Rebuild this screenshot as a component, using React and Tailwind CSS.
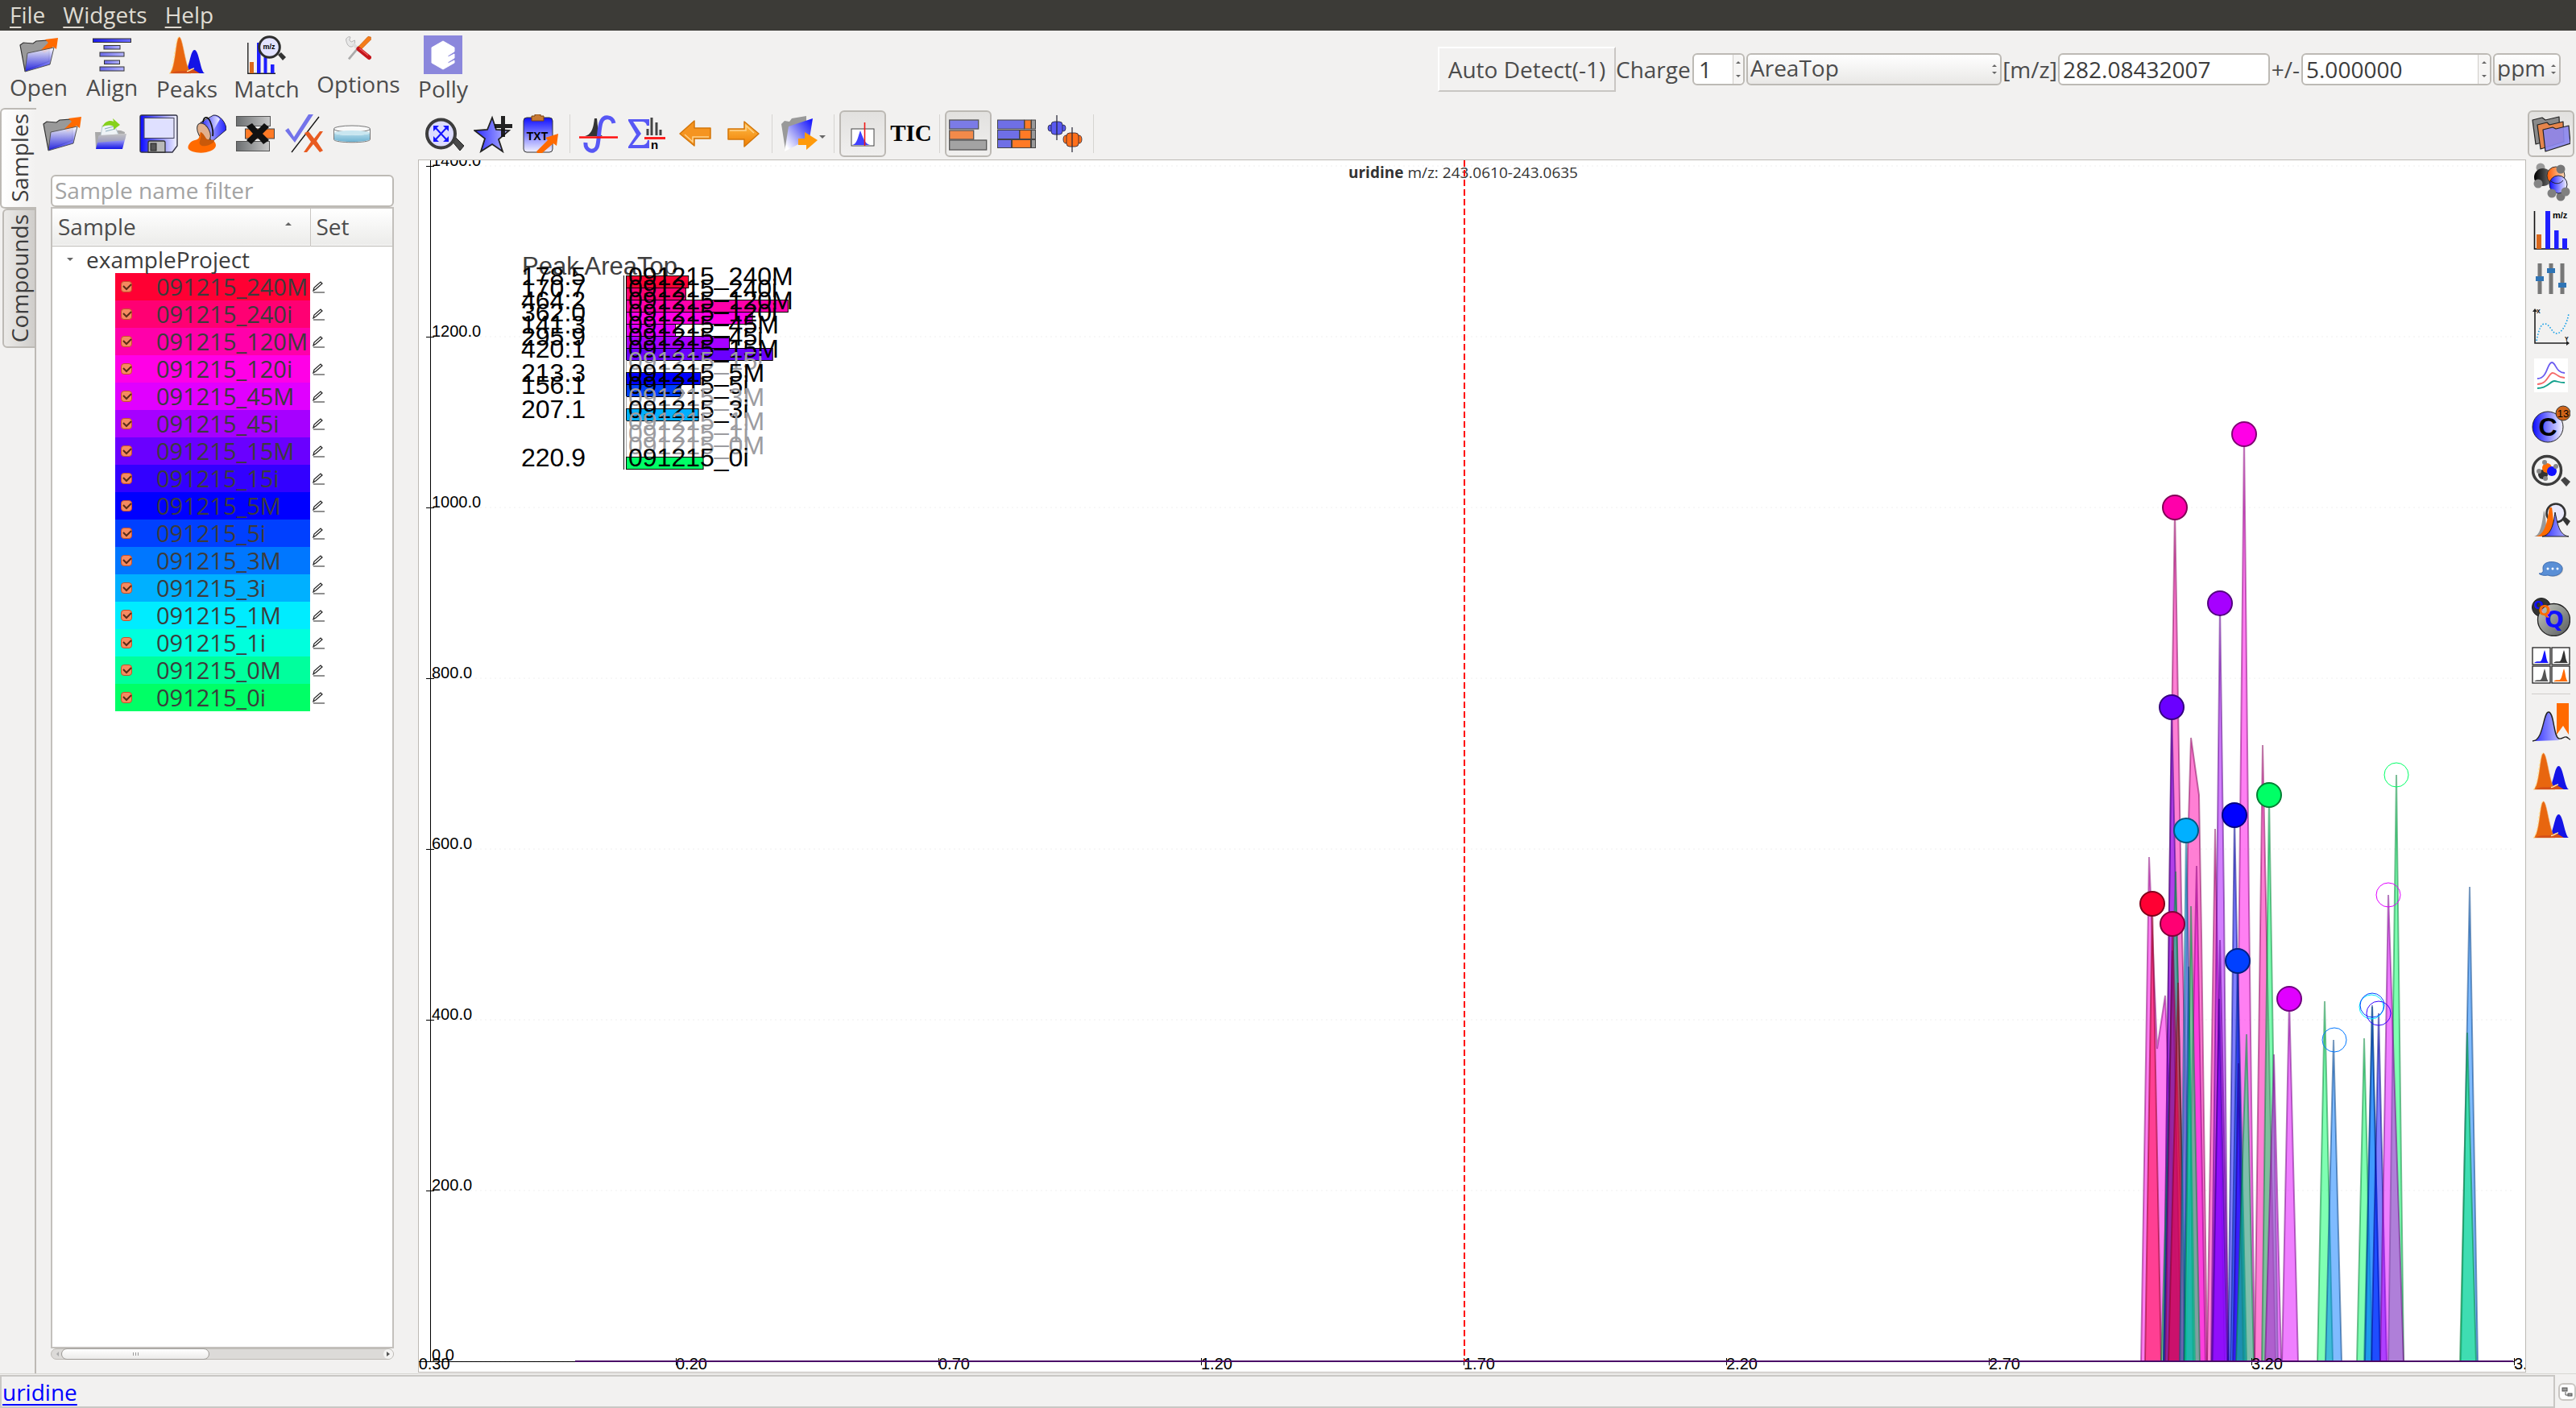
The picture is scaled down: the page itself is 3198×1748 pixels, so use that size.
import React from "react";

const SAMPLES = [
  { name: "091215_240M", color: "#ff0033", area: 178.5 },
  { name: "091215_240i", color: "#ff0073", area: 170.7 },
  { name: "091215_120M", color: "#ff00aa", area: 464.2 },
  { name: "091215_120i", color: "#ff00e6", area: 362.0 },
  { name: "091215_45M", color: "#e000ff", area: 141.3 },
  { name: "091215_45i", color: "#a600ff", area: 295.9 },
  { name: "091215_15M", color: "#6a00ff", area: 420.1 },
  { name: "091215_15i", color: "#3300ff" },
  { name: "091215_5M", color: "#0000ff", area: 213.3 },
  { name: "091215_5i", color: "#0040ff", area: 156.1 },
  { name: "091215_3M", color: "#0077ff" },
  { name: "091215_3i", color: "#00b0ff", area: 207.1 },
  { name: "091215_1M", color: "#00ecff" },
  { name: "091215_1i", color: "#00ffdd" },
  { name: "091215_0M", color: "#00ff9d" },
  { name: "091215_0i", color: "#00ff66", area: 220.9 },
];

/* ---------- icons ---------- */

function Defs() {
  const grads = [
    ["gBlue", "#ffffff", "#1414e6", 0, 1],
    ["gBlueUp", "#0f0fff", "#f2f2ff", 0, 1],
    ["gBlueH", "#0a0aff", "#f4f4ff", 1, 0],
    ["gBlueR", "#f0f0ff", "#2020ff", 1, 0],
    ["gOrange", "#ffc04d", "#f07d00", 0, 1],
    ["gSteel", "#6b6e70", "#c9c9c9", 1, 0],
    ["gBar", "#1a1aee", "#6f6fff", 1, 0],
    ["gBar2", "#6a6ae8", "#b4b4ff", 1, 0],
    ["gPeak", "#2b2bff", "#b9b9ff", 1, 0],
    ["gGrey", "#c9ccc4", "#55585a", 1, 1],
    ["gBlack", "#000000", "#777777", 1, 0],
    ["gOr2", "#ff5a00", "#ffd9b8", 1, 0],
    ["gWater", "#b5dcea", "#6fb3d2", 0, 1],
  ];
  return (
    <svg className="absolute size-0" aria-hidden="true">
      <defs>
        {grads.map(([id, a, b, x, y]) => (
          <linearGradient key={id} id={id} x1="0" y1="0" x2={x} y2={y}>
            <stop offset="0" stopColor={a} />
            <stop offset="1" stopColor={b} />
          </linearGradient>
        ))}
        <linearGradient id="gFold" x1="1" y1="0.1" x2="0.1" y2="0.9">
          <stop offset="0" stopColor="#1414ff" />
          <stop offset=".45" stopColor="#7c7cf4" />
          <stop offset="1" stopColor="#ffffff" />
        </linearGradient>
      </defs>
    </svg>
  );
}

function Svg({ children, className = "size-12" }) {
  return (
    <svg viewBox="0 0 48 48" className={className + " shrink-0"} aria-hidden="true">
      {children}
    </svg>
  );
}

const FolderOpen = () => (
  <Svg>
    <path d="M1 12 5 9l12 1 4-3 16-1v26L7 44z" fill="#999" stroke="#333" strokeWidth="1.2" />
    <path d="M27 18 36 9l-4-4L48 3l-2 14-4-3-11 8z" fill="#ff6a00" />
    <path d="M10 22 43 15 38 36 7 45z" fill="url(#gBlue)" fillOpacity=".88" stroke="#555" />
  </Svg>
);

const AlignIcon = () => (
  <Svg>
    <g stroke="#333" strokeWidth="1">
      <rect x=".5" y="4" width="47" height="4.5" fill="url(#gBar)" />
      <rect x="14" y="12.500" width="20" height="4.5" fill="url(#gBar2)" />
      <rect x="9" y="21" width="30" height="5" fill="url(#gBar2)" />
      <rect x="14.500" y="31" width="19" height="4.500" fill="url(#gBar2)" />
      <rect x="9" y="39" width="30" height="5" fill="url(#gBar2)" />
    </g>
  </Svg>
);

const PeaksIcon = () => (
  <Svg>
    <path d="M20 47C27 44 28 18 33.500 18S41 45 46 47z" fill="#1414e6" />
    <path d="M2 47C10 44 10 2 14.500 2S22 40 29 47z" fill="#e8660f" stroke="#f0a050" strokeWidth=".6" />
    <path d="M2 47C8 44 9 2 14 2" fill="none" stroke="#ffe9a8" strokeWidth="1.200" strokeDasharray="3 2" />
    <path d="M4 47c7-4 13-2 19-3l7-3 10 6z" fill="#d4501a" />
    <path d="M24 44.500c3 0 7-4 9-3.500" fill="none" stroke="#ffe9a8" strokeWidth="1.500" />
  </Svg>
);

const MatchIcon = () => (
  <Svg>
    <path d="M.8 9v38.300H35" fill="none" stroke="#222" strokeWidth="1.400" />
    <rect x="3" y="33" width="5" height="14" fill="#d9681c" />
    <rect x="12" y="9" width="4.500" height="38" fill="#1f1fff" />
    <rect x="20.500" y="24" width="4" height="23" fill="#1f1fff" />
    <rect x="29" y="36" width="4.500" height="11" fill="#1f1fff" />
    <path d="m38 24 4-3 6 6-4 4z" fill="#333" />
    <circle cx="27.500" cy="14.500" r="12.800" fill="#e3e3ff" stroke="#2d2d2d" strokeWidth="3" />
    <text x="27" y="17" textAnchor="middle" fontSize="9" fontWeight="700" fontFamily="Liberation Sans, sans-serif">m/z</text>
  </Svg>
);

const OptionsIcon = () => (
  <Svg className="size-8">
    <path d="m6 44 20-24" stroke="#aaa" strokeWidth="4" />
    <path d="M1 9c-1-4 5-8 8-6l-2 6 4 3 6-3c2 8-3 13-8 12S2 14 1 9z" fill="#e8e8e8" stroke="#999" />
    <path d="m14 16 12 12" stroke="#ddd" strokeWidth="6" />
    <path d="m22 23 20-21 5 1v5L27 28z" fill="#f57c1a" stroke="#c85a00" />
    <path d="m24 25 20 16" stroke="#c4161c" strokeWidth="8" strokeLinecap="round" />
    <path d="m26 24 16 13" stroke="#ee5b5b" strokeWidth="2" />
  </Svg>
);

const PollyIcon = () => (
  <Svg>
    <rect width="48" height="48" fill="#8b87dc" />
    <path d="m24 7 14 8v5l-8 5v2l8-4v5l-8 5v2l8-4v3l-14 8-14-8V15z" fill="#fff" stroke="#fff" strokeLinejoin="round" />
  </Svg>
);

const ImportIcon = () => (
  <Svg>
    <path d="M5 22h8l2-3 22 1 5 2-3 20H6z" fill="#a9a9a9" />
    <path d="m14 14 14-3 6 14-22 2z" fill="#eef3f6" stroke="#b9c8d0" />
    <path d="m17 18 11-3m-10 6 12-3" stroke="#8ab" />
    <path d="M14 16c3-8 10-9 14-7l-1-4 9 8-8 6v-4c-4-2-10-2-14 1z" fill="#86d11b" />
    <path d="m10 26 34-2-5 19H6z" fill="url(#gBlue)" />
    <path d="m10 26 34-2-2 8-34 3z" fill="#aaa" opacity=".7" />
  </Svg>
);

const SaveIcon = () => (
  <Svg>
    <path d="M1 3q0-2 2-2h42q2 0 2 2v36l-6 8H3q-2 0-2-2z" fill="url(#gBlueH)" stroke="#334" strokeWidth="1.400" />
    <rect x="6" y="4.500" width="37" height="25" fill="#dfe0ff" stroke="#445" />
    <path d="M11 47V35q0-2 2-2h17q2 0 2 2v12z" fill="#b9b9b9" stroke="#333" strokeWidth="1.300" />
    <rect x="14" y="36" width="7" height="9" fill="#555" stroke="#222" />
  </Svg>
);

const BucketIcon = () => (
  <Svg>
    <path d="m16 10 16-9c8-1 16 10 16 18L30 34z" fill="url(#gBlueR)" stroke="#223" />
    <path d="m14 12 18-10c4 0 6 2 8 4L24 34z" fill="url(#gBlueH)" />
    <ellipse cx="20" cy="22" rx="7" ry="12" transform="rotate(-28 20 22)" fill="#e2b08c" stroke="#333" />
    <path d="M19 10C20 2 25 2 28 9s4 12 3 18" fill="none" stroke="#111" strokeWidth="1.800" />
    <path d="M16 22c-2 6-1 9-7 10S-1 40 1 43s12 6 22 4 14-7 11-12-9-1-11-4-3-7-7-9z" fill="#ff6a00" />
    <path d="M16 22c2 10-4 12 0 16s17-2 17-5-8 0-10-3-3-6-7-8z" fill="#c9590a" />
  </Svg>
);

const RemoveIcon = () => (
  <Svg>
    <rect x=".5" y="2.500" width="42" height="12" fill="url(#gSteel)" stroke="#555" />
    <rect x=".5" y="33.500" width="41" height="12" fill="url(#gSteel)" stroke="#555" />
    <rect x="11.500" y="18" width="36" height="12" fill="#ff7a26" stroke="#444" />
    <path d="m13 15 7-4 7 8 8-8 6 5-8 8 8 8-7 5-7-8-8 8-6-5 8-8z" fill="#111" />
  </Svg>
);

const CheckCrossIcon = () => (
  <Svg>
    <path d="m1 20 4-3 7 11L30 0h6L13 35z" fill="#7373ea" />
    <path d="M9 47 43 3" stroke="#111" strokeWidth="1.300" />
    <path d="m25 23 5-2 7 9 7-9h4l-8 12 8 12-4 2-8-10-8 10h-4l9-13z" fill="#e85a20" />
  </Svg>
);

const PetriIcon = () => (
  <Svg>
    <path d="M1.500 18v13c0 5 45 5 45 0V18" fill="#f4fafc" stroke="#777" />
    <path d="M2 23c2 4 42 4 44 0v8c-2 4-42 4-44 0z" fill="url(#gWater)" />
    <ellipse cx="24" cy="18" rx="22.500" ry="4" fill="#f8f8f8" stroke="#777" />
    <ellipse cx="24" cy="23" rx="22" ry="3" fill="#c9e6f0" />
  </Svg>
);

const ZoomFitIcon = () => (
  <Svg>
    <path d="m33 33 5-4 10 10-5 6z" fill="#4a4a4a" stroke="#222" />
    <circle cx="19.500" cy="24" r="17.500" fill="#dcdcff" stroke="#3d3d3d" strokeWidth="4" />
    <path d="m13 17 13 14M26 17 13 31" stroke="#1414ff" strokeWidth="2" />
    <path d="M10 14h7l-7 7zm19 0v7l-7-7zM10 34v-7l7 7zm19 0h-7l7-7z" fill="#1414ff" />
  </Svg>
);

const StarIcon = () => (
  <Svg>
    <path d="m23 4 5 15 16 1-13 11 5 15-13-9-14 9 5-16L1 20l16-1z" fill="url(#gPeak)" stroke="#222" strokeWidth="1.800" />
    <path d="M34 2h5v10h9v5h-9v11h-5V17h-8v-5h8z" fill="#111" opacity=".92" />
  </Svg>
);

const TxtIcon = () => (
  <Svg>
    <rect x="2" y="4" width="36" height="43" rx="4" fill="url(#gBlueUp)" stroke="#333" />
    <path d="M12 6V2h4V0h7v2h4v6H12z" fill="#c87a34" stroke="#7a4310" />
    <text x="19" y="32" textAnchor="middle" fontSize="14" fontWeight="700" fontFamily="Liberation Sans, sans-serif">TXT</text>
    <path d="m18 46 14-14-3-3 16-5-2 15-4-3-14 12h-6z" fill="#ff6a00" />
  </Svg>
);

const IntegralIcon = () => (
  <Svg>
    <path d="M7 27c10-2 11-14 12-22h3c1 8 1 19 7 22z" fill="#333" />
    <path d="M8 35c-1 10 10 14 14 6 3-6 2-26 6-33 3-6 13-6 15 3" fill="none" stroke="#5757f5" strokeWidth="5" />
    <path d="M0 28.500h48" stroke="#ff1010" strokeWidth="2.500" />
  </Svg>
);

const SigmaIcon = () => (
  <Svg>
    <path d="M1 6h26v8h-3q-1-5-6-5H7l10 15L6 38h12q6 0 7-6h2v10H1v-2l10-15L1 8z" fill="#5757f5" />
    <path d="M25 26v-8m5 8V4m6 22V10m5 16v-7" stroke="#444" strokeWidth="3" />
    <path d="M21 29.500h26" stroke="#ff1f1f" strokeWidth="3" />
    <text x="29" y="43" fontSize="15" fontWeight="700" fontFamily="Liberation Sans, sans-serif">n</text>
  </Svg>
);

const ArrowIcon = ({ flip }) => (
  <Svg className={flip ? "size-12 rotate-180" : "size-12"}>
    <path d="M5 18h20V9l18 15-18 16v-9H5z" fill={flip ? "#f59420" : "url(#gOrange)"} stroke="#d37508" strokeWidth="1.500" strokeLinejoin="round" />
    <path d="M7 20h20v-6l10 9" fill="none" stroke="#ffd28a" strokeWidth="1.500" />
  </Svg>
);

const ExportFolderIcon = () => (
  <Svg>
    <path d="m1 12 4-4 6 1 3-4 18-3v8L6 44z" fill="#999" />
    <path d="m10 15 30-10-4 25L5 46z" fill="url(#gFold)" />
    <path d="M22 30h8v-8l16 10-14 12v-6H22z" fill="#ff9a0a" />
  </Svg>
);

const EicIcon = () => (
  <Svg>
    <rect x="10" y="18" width="28" height="21" fill="#fff" stroke="#444" />
    <path d="M11 38c6-1 7-10 10-18 3 8 6 17 12 18z" fill="#4040ff" />
    <path d="M26.500 10v29" stroke="#f01818" strokeWidth="1.600" />
  </Svg>
);

const BarsIcon = () => (
  <Svg>
    <g stroke="#555" strokeWidth="1.300">
      <rect x=".7" y="7" width="36" height="11" fill="#7b7be6" />
      <rect x=".7" y="20" width="30" height="11" fill="#f28a4a" />
      <rect x=".7" y="32" width="46" height="12" fill="#a3a3a3" />
    </g>
  </Svg>
);

const StackIcon = () => (
  <Svg>
    <g stroke="#444">
      <rect x=".5" y="7" width="33" height="11" fill="#6f6fe6" />
      <rect x="34" y="7" width="8" height="11" fill="#ff7a26" />
      <rect x="42.500" y="7" width="5" height="11" fill="#999" />
      <rect x=".5" y="19.500" width="27" height="11" fill="#6f6fe6" />
      <rect x="28" y="19.500" width="14" height="11" fill="#ff7a26" />
      <rect x="42.500" y="19.500" width="5" height="11" fill="#999" />
      <rect x=".5" y="31.500" width="17" height="10" fill="#6f6fe6" />
      <rect x="18.500" y="31.500" width="23" height="10" fill="#ff7a26" />
      <rect x="42.500" y="31.500" width="5" height="10" fill="#999" />
    </g>
  </Svg>
);

const BoxplotIcon = () => (
  <Svg>
    <g stroke="#223" strokeWidth=".8">
      <ellipse cx="6" cy="17" rx="3" ry="4" fill="#5a5af0" />
      <ellipse cx="22" cy="17" rx="3" ry="4" fill="#5a5af0" />
      <rect x="7" y="9" width="14" height="16" rx="4" fill="#5a5af0" />
      <ellipse cx="25" cy="31" rx="3" ry="5" fill="#ff6f1a" />
      <ellipse cx="42" cy="31" rx="3" ry="5" fill="#ff6f1a" />
      <rect x="26" y="23" width="15" height="17" rx="4" fill="#ff6f1a" />
      <path d="M14 1v31M33 16v31" strokeWidth="1.200" />
    </g>
  </Svg>
);

const FoldersIcon = () => (
  <Svg>
    <g stroke="#222" strokeWidth="1.200" strokeLinejoin="round">
      <path d="m1 7 12-3 4 3 17-4 1 26-30 8z" fill="#8a8a8a" />
      <path d="m7 13 12-3 3 3 17-4 1 25-29 9z" fill="#e5854c" />
      <path d="m14 19 12-3 4 2 16-4 2 22-31 10z" fill="#8b87ee" fillOpacity=".92" />
    </g>
  </Svg>
);

const MoleculeIcon = () => (
  <Svg>
    <circle cx="11" cy="6" r="5.500" fill="#999" />
    <circle cx="14" cy="18" r="11" fill="url(#gBlack)" />
    <circle cx="36" cy="42" r="5.500" fill="#777" />
    <circle cx="30" cy="16" r="11" fill="url(#gOr2)" stroke="#333" />
    <circle cx="33" cy="27" r="11" fill="url(#gBlueH)" stroke="#223" />
    <path d="M23 22c5 5 12 5 16 0" fill="none" stroke="#223" />
    <circle cx="36" cy="8" r="5.500" fill="#777" />
    <circle cx="8" cy="26" r="5.500" fill="#858585" />
    <circle cx="25" cy="38" r="5.500" fill="#808080" />
    <circle cx="42" cy="36" r="5.500" fill="#808080" />
  </Svg>
);

const SpectrumIcon = () => (
  <Svg>
    <path d="M3.500 0v47H46" fill="none" stroke="#111" strokeWidth="1.600" />
    <rect x="6" y="29" width="6" height="18" fill="#d9681c" />
    <rect x="17" width="6" height="47" fill="#1f1fff" />
    <rect x="28" y="24" width="5.500" height="23" fill="#1f1fff" />
    <rect x="38" y="34" width="6" height="13" fill="#1f1fff" />
    <text x="26" y="9" fontSize="11" fontWeight="700" fontFamily="Liberation Sans, sans-serif">m/z</text>
  </Svg>
);

const SlidersIcon = () => (
  <Svg>
    <path d="M10 5v38M24 5v38M38 5v38" stroke="#777" strokeWidth="5" />
    <path d="M5 24h10M19 14h10M33 32h10" stroke="#2f74b5" strokeWidth="6" />
  </Svg>
);

const CurveIcon = () => (
  <Svg>
    <path d="M4 4v40h42" fill="none" stroke="#222" strokeWidth="1.600" />
    <path d="m1 5 3-4 3 4zM43 41l4 3-4 3z" fill="#222" />
    <path d="M6 41C9 26 12 20 16 20c7 0 9 12 15 12S44 20 46 7" fill="none" stroke="#18a0e8" strokeWidth="1.600" strokeDasharray="1.600 2" />
    <text x="6" y="7" fontSize="7" fontWeight="700" fontFamily="Liberation Sans, sans-serif">X</text>
    <text x="41" y="41" fontSize="7" fontWeight="700" fontFamily="Liberation Sans, sans-serif">Y</text>
  </Svg>
);

const TracesIcon = () => (
  <Svg>
    <rect x="3" y="3" width="42" height="42" fill="#fff" />
    <g fill="none" strokeWidth="1.800">
      <path d="M7 28c13 0 12-20 18-20 5 0 5 13 16 13" stroke="#6b5cf0" />
      <path d="M7 35c13 0 14-14 19-14 5 0 6 6 15 6" stroke="#f56a6a" />
      <path d="M7 40c13 0 16-9 21-9 4 0 5 2 13 2" stroke="#12a08c" />
    </g>
  </Svg>
);

const C13Icon = () => (
  <Svg>
    <circle cx="20" cy="28" r="19" fill="url(#gBlueH)" stroke="#222" />
    <text x="20" y="39" textAnchor="middle" fontSize="32" fontWeight="700" fontFamily="Liberation Sans, sans-serif">C</text>
    <circle cx="39" cy="11" r="9" fill="#cf6418" stroke="#333" />
    <text x="39" y="15.500" textAnchor="middle" fontSize="13" fontFamily="Liberation Sans, sans-serif">13</text>
  </Svg>
);

const ZoomMoleculeIcon = () => (
  <Svg>
    <path d="m36 34 5-4 7 6-5 6z" fill="#444" />
    <circle cx="19" cy="22" r="17.500" fill="#f2f2f2" stroke="#3d3d3d" strokeWidth="3.500" />
    <circle cx="14" cy="27" r="6" fill="#333" />
    <circle cx="19" cy="19" r="6" fill="#ff6a00" />
    <circle cx="25" cy="23" r="6" fill="#1010ff" />
    <circle cx="16" cy="12" r="3" fill="#888" />
    <circle cx="9" cy="23" r="3" fill="#888" />
    <circle cx="30" cy="17" r="3" fill="#888" />
    <circle cx="17" cy="32" r="3" fill="#888" />
  </Svg>
);

const ZoomPeaksIcon = () => (
  <Svg>
    <path d="m38 23 4-3 6 5-4 6z" fill="#333" />
    <circle cx="30" cy="15" r="11.500" fill="#e9e9fb" stroke="#333" strokeWidth="2.600" />
    <path d="M3 44C11 42 13 28 15 12c4 6 1 28 8 32z" fill="#999" />
    <path d="M5 44c11-2 14-16 17-36h3c2 10 2 32 8 36z" fill="#ff6a00" />
    <path d="M13 44c11-2 14-14 16-30 3 12 4 28 17 30z" fill="url(#gPeak)" stroke="#222" />
  </Svg>
);

const ChatIcon = () => (
  <Svg>
    <ellipse cx="27" cy="25" rx="12" ry="9" fill="#999" opacity=".5" />
    <path d="M13 29c-1 1-3 1-4 1 2 2 7 3 11 2 8 3 18-1 18-8 0-10-24-12-24-1 0 3 1 4-1 6z" fill="#5a8fd6" stroke="#3d6cb0" />
    <circle cx="20" cy="24" r="1.500" fill="#fff" />
    <circle cx="26" cy="24" r="1.500" fill="#fff" />
    <circle cx="32" cy="24" r="1.500" fill="#fff" />
  </Svg>
);

const QIcon = () => (
  <Svg>
    <circle cx="12" cy="12" r="11.500" fill="#333" stroke="#222" />
    <circle cx="27.500" cy="27.500" r="20" fill="url(#gGrey)" stroke="#222" strokeWidth="1.300" />
    <g fontFamily="DejaVu Sans, sans-serif" fontWeight="700" textAnchor="middle">
      <text x="9" y="14" fontSize="14" fill="#1010ff">Q</text>
      <text x="28" y="37" fontSize="28" fill="#1010ff">Q</text>
      <text x="16" y="22" fontSize="18" fill="#ff6a00">Q</text>
    </g>
  </Svg>
);

const GalleryIcon = () => {
  const cells = [[1, 2, "#1414ff"], [25, 2, "#333"], [1, 25, "#555"], [25, 25, "#ff6a00"]];
  return (
    <Svg>
      {cells.map(([x, y, c]) => (
        <g key={x + "-" + y} transform={`translate(${x} ${y})`}>
          <rect width="22" height="21" fill="#fff" stroke="#222" strokeWidth="1.300" />
          <path d="M2 19c4-3 6-1 8-2s3-8 5-14c2 5 2 14 5 16z" fill={c} />
        </g>
      ))}
    </Svg>
  );
};

const BookmarkPeakIcon = () => (
  <Svg>
    <path d="M1 47c14 0 13-36 20-36s7 35 14 35z" fill="url(#gPeak)" />
    <path d="M1 47c14 0 13-36 20-36s6 32 13 33c4 1 6-3 9-2s3 3 5 3" fill="none" stroke="#222" strokeWidth="1.400" />
    <path d="M31 0h15v39l-7-11-8 11z" fill="#ff6a00" />
  </Svg>
);

const Pencil = () => (
  <svg viewBox="0 0 16 16" className="size-4" aria-hidden="true" fill="none" stroke="#222" strokeWidth="1.200">
    <path d="M1 15h14M1 13l1-4 8-7 2 2-8 7z" />
  </svg>
);

const Caret = ({ up, className = "h-1 w-2" }) => (
  <svg viewBox="0 0 8 4" className={className} aria-hidden="true">
    <path d={up ? "M0 4 4 0l4 4z" : "M0 0l4 4 4-4z"} fill="#666" />
  </svg>
);

/* ---------- controls ---------- */

function BigButton({ label, width, icon, gap }) {
  return (
    <button type="button" className={"flex flex-col items-center pt-1.5 text-[#4c4c4c] " + width}>
      {icon}
      <span className={"leading-8 " + gap}>{label}</span>
    </button>
  );
}

function ToolButton({ label, children, checked, className = "w-[60px]" }) {
  return (
    <span className={"flex h-[60px] shrink-0 items-center justify-center " + className}>
      <button
        type="button"
        aria-label={label}
        aria-pressed={checked}
        className={
          "flex h-[58px] min-w-[58px] items-center justify-center rounded-md " +
          (checked ? "border-2 border-[#bcb9b4] bg-linear-to-b from-[#e2e1df] to-[#f0efee]" : "")
        }
      >
        {children}
      </button>
    </span>
  );
}

const Sep = () => <span className="mx-[5px] h-12 w-px shrink-0 bg-[#d6d4d1]" />;

function SpinArrows() {
  return (
    <span className="flex w-4 flex-col items-center justify-between rounded-r-md border-l border-[#d0cdc9] bg-[#f6f5f4] py-2">
      <Caret up className="h-[3px] w-1.5" />
      <Caret className="h-[3px] w-1.5" />
    </span>
  );
}

function Combo({ label, value, width }) {
  return (
    <span className={"relative flex h-10 rounded-md border-2 border-[#bdbab5] bg-linear-to-b from-white to-[#e9e8e6] " + width}>
      <select aria-label={label} defaultValue={value} className="h-9 w-full appearance-none bg-transparent pb-1 pl-[3px] leading-8 text-[#4c4c4c] outline-none">
        <option>{value}</option>
      </select>
      <span className="pointer-events-none absolute inset-y-0 right-1 flex flex-col items-center justify-center gap-1.5">
        <Caret up className="h-[3px] w-1.5" />
        <Caret className="h-[3px] w-1.5" />
      </span>
    </span>
  );
}

/* ---------- chart ---------- */

const BASE = 1690;

// Each trace: colour followed by the points above the baseline.
const TRACES = [
  ["#ff00aa", [[2686, BASE], [2693, 1120], [2700, 630], [2708, 1120], [2722, BASE]]],
  ["#ff00aa", [[2707, BASE], [2716, 1054], [2720, 916], [2730, 987], [2733, 1162], [2740, BASE]]],
  ["#ff00e6", [[2658, BASE], [2668, 1064], [2678, 1302], [2688, 1236], [2706, BASE]]],
  ["#ff0033", [[2663, BASE], [2672, 1122], [2683, BASE]]],
  ["#ff00e6", [[2774, BASE], [2780, 1120], [2786, 539], [2792, 1120], [2799, BASE]]],
  ["#ff00aa", [[2740, BASE], [2750, 1029], [2762, BASE]]],
  ["#ff00e6", [[2714, BASE], [2727, 1075], [2738, BASE]]],
  ["#ff00aa", [[2799, BASE], [2809, 925], [2825, BASE]]],
  ["#a600ff", [[2745, BASE], [2752, 1120], [2756, 749], [2761, 1120], [2766, BASE]]],
  ["#a600ff", [[2747, BASE], [2756, 1167], [2767, BASE]]],
  ["#6600ff", [[2746, BASE], [2755, 1240], [2765, BASE]]],
  ["#6600ff", [[2686, BASE], [2696, 878], [2714, BASE]]],
  ["#00ff66", [[2683, BASE], [2701, 1082], [2714, BASE]]],
  ["#0000ff", [[2686, BASE], [2697, 1180], [2708, BASE]]],
  ["#ff0073", [[2688, BASE], [2697, 1147], [2713, BASE]]],
  ["#ff0033", [[2692, BASE], [2704, 1220], [2713, BASE]]],
  ["#00b0ff", [[2706, BASE], [2714, 1030], [2725, BASE]]],
  ["#0077ff", [[2711, BASE], [2717, 1200], [2723, BASE]]],
  ["#00ff66", [[2712, BASE], [2720, 1125], [2731, BASE]]],
  ["#0000ff", [[2766, BASE], [2774, 1012], [2787, BASE]]],
  ["#0040ff", [[2769, BASE], [2778, 1192], [2789, BASE]]],
  ["#3300ff", [[2772, BASE], [2779, 1320], [2785, BASE]]],
  ["#00ff66", [[2776, BASE], [2789, 1284], [2798, BASE]]],
  ["#00ff66", [[2808, BASE], [2817, 987], [2828, BASE]]],
  ["#e000ff", [[2812, BASE], [2823, 1309], [2832, BASE]]],
  ["#e000ff", [[2833, BASE], [2842, 1240], [2853, BASE]]],
  ["#00ff66", [[2877, BASE], [2886, 1243], [2896, BASE]]],
  ["#0077ff", [[2887, BASE], [2897, 1291], [2907, BASE]]],
  ["#00ff66", [[2926, BASE], [2935, 1289], [2945, BASE]]],
  ["#00ecff", [[2935, BASE], [2945, 1250], [2955, BASE]]],
  ["#0040ff", [[2936, BASE], [2945, 1248], [2955, BASE]]],
  ["#0000ff", [[2944, BASE], [2953, 1258], [2963, BASE]]],
  ["#00ff66", [[2965, BASE], [2975, 962], [2984, BASE]]],
  ["#e000ff", [[2955, BASE], [2965, 1111], [2984, BASE]]],
  ["#0077ff", [[3055, BASE], [3066, 1101], [3076, BASE]]],
  ["#00ff66", [[3054, BASE], [3063, 1282], [3074, BASE]]],
];

const DOTS = [
  ["#ff00e6", 2786, 539], ["#ff00aa", 2700, 630], ["#a600ff", 2756, 749],
  ["#6a00ff", 2696, 878], ["#00b0ff", 2714, 1031], ["#0000ff", 2774, 1012],
  ["#00ff66", 2817, 987], ["#ff0033", 2672, 1122], ["#ff0073", 2697, 1147],
  ["#0040ff", 2778, 1193], ["#e000ff", 2842, 1240],
];

const RINGS = [
  ["#00ff66", 2975, 962], ["#e000ff", 2965, 1111], ["#0077ff", 2898, 1291],
  ["#00ecff", 2944, 1250], ["#0040ff", 2945, 1248], ["#3300ff", 2953, 1258],
];

function dark(hex) {
  return "#" + [1, 3, 5].map((i) => Math.round(parseInt(hex.slice(i, i + 2), 16) / 2).toString(16).padStart(2, "0")).join("");
}

function Chart() {
  const yTicks = [0, 200, 400, 600, 800, 1000, 1200, 1400];
  const xTicks = ["-0.30", "0.20", "0.70", "1.20", "1.70", "2.20", "2.70", "3.20", "3.70"];
  return (
    <svg
      viewBox="520 199 2615 1504"
      preserveAspectRatio="xMinYMin meet"
      className="block h-full w-full"
      role="img"
      aria-label="Extracted ion chromatogram"
      fontFamily="Liberation Sans, sans-serif"
    >
      {yTicks.map((v, i) => (
        <path key={v} d={`M536 ${BASE - i * 212}H3122`} stroke="#f0f0f0" strokeDasharray="2 4" />
      ))}

      <text x="1674" y="221" fontSize="19" fontFamily="Open Sans, sans-serif" fill="#333">
        <tspan fontWeight="700">uridine</tspan> m/z: 243.0610-243.0635
      </text>

      {TRACES.map(([c, pts], i) => (
        <polygon
          key={i}
          points={pts.map((p) => p.join(",")).join(" ")}
          fill={c}
          fillOpacity=".5"
          stroke={dark(c)}
          strokeOpacity=".5"
          strokeWidth="2"
          strokeLinejoin="bevel"
        />
      ))}

      <path d={`M534.500 199V${BASE}M520 ${BASE}.500H3122`} stroke="#000" strokeWidth="1" shapeRendering="crispEdges" />
      {yTicks.slice(1).map((v, i) => (
        <g key={v}>
          <path d={`M529 ${BASE - (i + 1) * 212}.500h10`} stroke="#000" shapeRendering="crispEdges" />
          <text x="536" y={BASE - (i + 1) * 212} fontSize="20">{v}.0</text>
        </g>
      ))}
      <text x="536" y={BASE - 1} fontSize="20">0.0</text>
      {xTicks.map((t, i) => (
        <g key={t}>
          <path d={`M${513 + i * 326}.500 1686v9`} stroke="#000" shapeRendering="crispEdges" />
          <text x={513 + i * 326} y="1700" fontSize="20">{t}</text>
        </g>
      ))}
      <path d={`M714 ${BASE}H3120`} stroke="#4a0a68" strokeWidth="2" shapeRendering="crispEdges" />

      {DOTS.map(([c, x, y]) => (
        <circle key={c} cx={x} cy={y} r="15" fill={c} stroke={dark(c)} strokeWidth="2" />
      ))}
      {RINGS.map(([c, x, y]) => (
        <circle key={c} cx={x} cy={y} r="15" fill="none" stroke={c} />
      ))}

      <path d={`M1818 199V${BASE}`} stroke="#ff0000" strokeWidth="2" strokeDasharray="8 4" shapeRendering="crispEdges" />

      <g fontSize="32">
        <text x="648" y="341" fontSize="31" fill="#404040">Peak AreaTop</text>
        <path d="M774.500 342V583" stroke="#111" />
        {SAMPLES.map((s, i) => (
          <rect
            key={s.name}
            x="777.500"
            y={342.5 + i * 15}
            width={s.area ? s.area * 0.4325 : 0.1}
            height="15"
            fill={s.color}
            stroke={s.area ? "#000" : "#aaa"}
          />
        ))}
        {SAMPLES.map((s, i) => (
          <g key={s.name} fill={s.area ? "#000" : "#9c9ca0"}>
            {s.area && <text x="647" y={354 + i * 15}>{s.area.toFixed(1)}</text>}
            <text x="780" y={354 + i * 15}>{s.name}</text>
          </g>
        ))}
      </g>
    </svg>
  );
}

/* ---------- panels ---------- */

function SampleTable() {
  return (
    <table className="w-full table-fixed border-collapse text-left">
      <colgroup>
        <col className="w-[320px]" />
        <col />
      </colgroup>
      <thead>
        <tr className="h-[46px] border-b border-[#b8b5b0] bg-linear-to-b from-white to-[#ececea] text-[#4c4c4c]">
          <th className="border-r border-[#c9c6c2] px-[7px] pb-0.5 font-normal leading-8">
            <span className="flex items-start justify-between pr-4">
              Sample <Caret up className="mt-2.5 h-1.5 w-2" />
            </span>
          </th>
          <th className="px-[7px] pb-0.5 font-normal leading-8">Set</th>
        </tr>
      </thead>
      <tbody>
        <tr className="h-[34px]">
          <td className="p-0 leading-8" colSpan="2">
            <span className="flex items-center">
              <Caret className="ml-[18px] mr-[16px] h-1.5 w-2" />
              exampleProject
            </span>
          </td>
        </tr>
        {SAMPLES.map((s) => (
          <tr key={s.name} className="h-[34px]">
            <td className="p-0 pl-[78px]">
              <label className="flex h-[34px] items-center pl-1.5 text-[29px] leading-8" style={{ backgroundColor: s.color }}>
                <span className="grid size-4 shrink-0 place-items-center">
                  <input type="checkbox" defaultChecked className="col-start-1 row-start-1 size-3.5 appearance-none rounded-sm border border-[#c8502a] bg-[#f58a60]" />
                  <svg viewBox="0 0 14 14" className="pointer-events-none col-start-1 row-start-1 size-3.5" fill="none" stroke="#5c2c18" strokeWidth="2" aria-hidden="true">
                    <path d="m3 6 4 4 6-6" />
                  </svg>
                </span>
                <span className="ml-[29px]">{s.name}</span>
              </label>
            </td>
            <td className="p-0 pl-[3px]"><Pencil /></td>
          </tr>
        ))}
      </tbody>
    </table>
  );
}

export default function App() {
  return (
    <div className="flex h-screen flex-col overflow-hidden bg-[#f2f1f0] font-['Open_Sans',sans-serif] text-[28px] text-[#3c3c3c]">
      <Defs />
      <nav className="flex h-[38px] shrink-0 items-start gap-[22px] bg-[#3c3b37] pl-3 text-[#dfdbd2]">
        {["File", "Widgets", "Help"].map((m) => (
          <button key={m} type="button" className="leading-9">
            <span className="underline decoration-2 underline-offset-4">{m[0]}</span>
            {m.slice(1)}
          </button>
        ))}
      </nav>

      <header className="flex h-24 shrink-0 items-start justify-between">
        <div className="flex">
          <BigButton label="Open" width="ml-1 w-[88px]" icon={<FolderOpen />} gap="" />
          <BigButton label="Align" width="w-[94px]" icon={<AlignIcon />} gap="" />
          <BigButton label="Peaks" width="w-[92px]" icon={<PeaksIcon />} gap="mt-0.5" />
          <BigButton label="Match" width="w-[106px]" icon={<MatchIcon />} gap="mt-0.5" />
          <BigButton label="Options" width="w-[122px]" icon={<OptionsIcon />} gap="mt-3" />
          <BigButton label="Polly" width="w-[88px]" icon={<PollyIcon />} gap="mt-0.5" />
        </div>
        <div className="flex items-center pr-[19px] pt-5 text-[#4c4c4c]">
          <button type="button" className="h-14 w-[221px] border-2 border-b-[#c9c6c3] border-l-white border-r-[#c9c6c3] border-t-white">
            Auto Detect(-1)
          </button>
          <label htmlFor="charge" className="w-[95px]">Charge</label>
          <span className="flex h-10 w-[65px] rounded-md border-2 border-[#bdbab5] bg-white">
            <input id="charge" defaultValue="1" className="w-full min-w-0 rounded-md bg-white pl-1.5 text-[#3c3c3c] outline-none" />
            <SpinArrows />
          </span>
          <span className="w-0.5" />
          <Combo label="Quantity type" value="AreaTop" width="w-[317px]" />
          <label htmlFor="mz" className="w-[70px] text-center">[m/z]</label>
          <input id="mz" defaultValue="282.08432007" className="h-10 w-[263px] rounded-md border-2 border-[#bdbab5] bg-white pl-1 text-[#3c3c3c] outline-none" />
          <label htmlFor="tol" className="w-[39px] text-center">+/-</label>
          <span className="flex h-10 w-[236px] rounded-md border-2 border-[#bdbab5] bg-white">
            <input id="tol" defaultValue="5.000000" className="w-full min-w-0 rounded-md bg-white pl-1 text-[#3c3c3c] outline-none" />
            <SpinArrows />
          </span>
          <span className="w-0.5" />
          <Combo label="Tolerance unit" value="ppm" width="w-[84px]" />
        </div>
      </header>

      <main className="flex min-h-0 flex-1">
        <div role="tablist" className="flex w-[45px] shrink-0 flex-col">
          <button role="tab" aria-selected="true" type="button" className="flex h-[125px] w-full items-center justify-center rounded-l-md border-y-2 border-l-2 border-[#bdbab5] bg-linear-to-r from-white to-[#f2f1f0]">
            <span className="rotate-180 leading-9 [writing-mode:vertical-rl]">Samples</span>
          </button>
          <button role="tab" aria-selected="false" type="button" className="ml-[3px] flex h-[173px] w-[42px] items-center justify-center rounded-l-md border-2 border-[#bdbab5] bg-linear-to-r from-[#ecebe9] to-[#cfcdca]">
            <span className="rotate-180 leading-9 [writing-mode:vertical-rl]">Compounds</span>
          </button>
          <span className="flex-1 border-r-2 border-[#bdbab5]" />
        </div>

        <section className="flex w-[474px] shrink-0 flex-col pb-[17px]">
          <div className="flex h-16 shrink-0 items-center pl-0.5">
            <ToolButton label="Open samples"><FolderOpen /></ToolButton>
            <ToolButton label="Import"><ImportIcon /></ToolButton>
            <ToolButton label="Save project"><SaveIcon /></ToolButton>
            <ToolButton label="Color samples"><BucketIcon /></ToolButton>
            <ToolButton label="Remove samples"><RemoveIcon /></ToolButton>
            <ToolButton label="Toggle samples"><CheckCrossIcon /></ToolButton>
            <ToolButton label="Mark blanks"><PetriIcon /></ToolButton>
          </div>
          <div className="mt-[19px] flex min-h-0 flex-1 flex-col pl-[18px] pr-[30px]">
            <input aria-label="Sample name filter" placeholder="Sample name filter" className="h-10 shrink-0 rounded-md border-2 border-[#bdbab5] bg-white pb-0.5 pl-[3px] outline-none placeholder:text-[#a3a3a3]" />
            <div className="min-h-0 flex-1 overflow-hidden border-2 border-[#c3c0bc] bg-white">
              <SampleTable />
            </div>
            <div className="flex h-3.5 shrink-0 items-center rounded-full border border-[#bdbab5] bg-[#dcdad8]">
              <svg viewBox="0 0 12 12" className="size-3 shrink-0" aria-hidden="true"><path d="M9 3v6L6 6z" fill="#aaa" /></svg>
              <span className="flex h-3.5 w-[184px] items-center justify-center gap-0.5 rounded-full border border-[#9d9a96] bg-linear-to-b from-white to-[#ecebea]">
                <i className="h-1 w-px bg-[#999]" /><i className="h-1 w-px bg-[#999]" /><i className="h-1 w-px bg-[#999]" />
              </span>
              <span className="flex-1" />
              <svg viewBox="0 0 12 12" className="size-3 shrink-0 rounded-full bg-[#f4f3f2]" aria-hidden="true"><path d="M4 3v6l4-3z" fill="#555" /></svg>
            </div>
          </div>
        </section>

        <section className="flex min-w-0 flex-1 flex-col pb-px">
          <div className="flex h-16 shrink-0 items-center pl-[3px]">
            <ToolButton label="Zoom to fit"><ZoomFitIcon /></ToolButton>
            <ToolButton label="Bookmark group"><StarIcon /></ToolButton>
            <ToolButton label="Copy as text"><TxtIcon /></ToolButton>
            <Sep />
            <ToolButton label="Integrate area"><IntegralIcon /></ToolButton>
            <ToolButton label="Average spectra"><SigmaIcon /></ToolButton>
            <ToolButton label="Previous"><ArrowIcon flip /></ToolButton>
            <ToolButton label="Next"><ArrowIcon /></ToolButton>
            <Sep />
            <ToolButton label="Export" className="w-[66px]">
              <ExportFolderIcon />
              <Caret className="mt-2 h-2 w-2" />
            </ToolButton>
            <Sep />
            <ToolButton label="Show EIC" checked><EicIcon /></ToolButton>
            <ToolButton label="Show TIC">
              <span className="font-['Liberation_Serif',serif] text-[29px] font-bold text-black">TIC</span>
            </ToolButton>
            <Sep />
            <ToolButton label="Show bar plot" checked><BarsIcon /></ToolButton>
            <ToolButton label="Show isotope plot"><StackIcon /></ToolButton>
            <ToolButton label="Show box plot"><BoxplotIcon /></ToolButton>
            <Sep />
          </div>
          <div className="min-h-0 flex-1 border border-[#bdbab5] bg-white">
            <Chart />
          </div>
        </section>

        <aside className="flex w-[62px] shrink-0 flex-col items-center pt-0.5">
          <ToolButton label="Samples panel" checked><FoldersIcon /></ToolButton>
          <ToolButton label="Compounds panel"><MoleculeIcon /></ToolButton>
          <ToolButton label="Spectra"><SpectrumIcon /></ToolButton>
          <ToolButton label="Settings"><SlidersIcon /></ToolButton>
          <ToolButton label="Scatter plot"><CurveIcon /></ToolButton>
          <ToolButton label="Alignment"><TracesIcon /></ToolButton>
          <ToolButton label="Isotopes"><C13Icon /></ToolButton>
          <ToolButton label="Match compounds"><ZoomMoleculeIcon /></ToolButton>
          <ToolButton label="Match fragmentation"><ZoomPeaksIcon /></ToolButton>
          <ToolButton label="Notes"><ChatIcon /></ToolButton>
          <ToolButton label="SRM list"><QIcon /></ToolButton>
          <ToolButton label="Gallery"><GalleryIcon /></ToolButton>
          <span className="my-[5px] h-px w-12 shrink-0 bg-[#cfcdca]" />
          <ToolButton label="Bookmarks"><BookmarkPeakIcon /></ToolButton>
          <ToolButton label="Peak table 1"><PeaksIcon /></ToolButton>
          <ToolButton label="Peak table 2"><PeaksIcon /></ToolButton>
        </aside>
      </main>

      <footer className="flex h-[43px] shrink-0 items-stretch border-t border-[#d8d6d3] pt-px">
        <div className="flex flex-1 items-center border-2 border-[#c9c7c4] pl-px leading-9">
          <a href="#uridine" className="text-[#0000ff] underline decoration-2 underline-offset-4">uridine</a>
        </div>
        <div className="flex w-[26px] items-center justify-end">
          <button type="button" aria-label="Show log" className="flex size-[22px] items-center justify-center rounded-md border-2 border-[#c9c6c2] bg-white">
            <svg viewBox="0 0 14 14" className="size-3.5" fill="#999" stroke="#555" aria-hidden="true">
              <rect x="1" y="2" width="6" height="4" /><rect x="8" y="9" width="5" height="3" /><path d="M5 7v4h3" fill="none" />
            </svg>
          </button>
        </div>
      </footer>
    </div>
  );
}
